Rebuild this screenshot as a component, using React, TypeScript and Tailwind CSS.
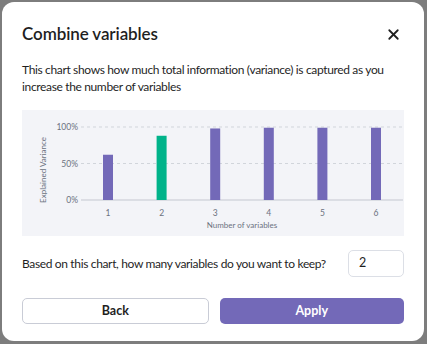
import { X } from "lucide-react";

const bars = [
  { n: 1, v: 0.62, color: "#7369b8" },
  { n: 2, v: 0.88, color: "#00b38a" },
  { n: 3, v: 0.98, color: "#7369b8" },
  { n: 4, v: 0.99, color: "#7369b8" },
  { n: 5, v: 0.99, color: "#7369b8" },
  { n: 6, v: 0.99, color: "#7369b8" },
];

function VarianceChart() {
  const top = 17;
  const base = 90;
  const h = base - top;
  return (
    <svg width="382" height="126" viewBox="0 0 382 126" className="block">
      <g fontFamily="Lato, 'Liberation Sans', sans-serif" fontSize="8.5" fill="#6b7280">
        {[1, 0.5].map((t) => (
          <line
            key={t}
            x1="59"
            x2="381"
            y1={base - h * t}
            y2={base - h * t}
            stroke="#d1d5db"
            strokeDasharray="3 3"
          />
        ))}
        <line x1="59" x2="381" y1={base} y2={base} stroke="#c4c7d0" />
        <text x="56" y={top + 3} textAnchor="end">100%</text>
        <text x="56" y={base - h / 2 + 3} textAnchor="end">50%</text>
        <text x="56" y={base + 3} textAnchor="end">0%</text>
        {bars.map((b, i) => {
          const cx = 86 + i * 53.6;
          const bh = h * b.v;
          return (
            <g key={b.n}>
              <rect x={cx - 5} y={base - bh} width="10" height={bh} fill={b.color} />
              <text x={cx} y="106" textAnchor="middle">{b.n}</text>
            </g>
          );
        })}
        <text x="220" y="118" textAnchor="middle" fontSize="8">Number of variables</text>
        <text
          x="0"
          y="0"
          fontSize="8"
          textAnchor="middle"
          transform="translate(24 60) rotate(-90)"
        >
          Explained Variance
        </text>
      </g>
    </svg>
  );
}

export default function App() {
  return (
    <div className="w-[427px] h-[344px] bg-[#7d7d7d] p-[2px] pr-[3px] pb-[3px] overflow-hidden">
      <div
        className="h-full bg-white rounded-[12px] px-5 pt-[21px] text-[#1f1f1f]"
        style={{ fontFamily: "Lato, 'Liberation Sans', sans-serif" }}
      >
        <div className="flex items-center justify-between h-[22px]">
          <h2 className="text-[17px] font-semibold tracking-[-0.1px]">Combine variables</h2>
          <X className="w-[17px] h-[17px] mr-[2px]" strokeWidth={2.5} />
        </div>
        <p className="mt-[16px] text-[12px] leading-[17px] tracking-[-0.35px]">
          This chart shows how much total information (variance) is captured as you increase the
          number of variables
        </p>
        <div className="mt-[15px] bg-[#f3f4f8]">
          <VarianceChart />
        </div>
        <div className="flex items-center justify-between mt-[14px]">
          <span className="text-[12px] tracking-[-0.35px]">
            Based on this chart, how many variables do you want to keep?
          </span>
          <div className="w-[56px] h-[27px] border border-[#dcdfe6] rounded-[5px] flex items-center pl-[10px] text-[12.5px]">
            2
          </div>
        </div>
        <div className="flex gap-[11px] mt-[21px]">
          <button className="flex-1 h-[26px] border border-[#c9ccd6] rounded-[5px] text-[12.5px] font-bold bg-white">
            Back
          </button>
          <button className="flex-1 h-[26px] rounded-[5px] text-[12.5px] font-bold bg-[#7369b8] text-white">
            Apply
          </button>
        </div>
      </div>
    </div>
  );
}
